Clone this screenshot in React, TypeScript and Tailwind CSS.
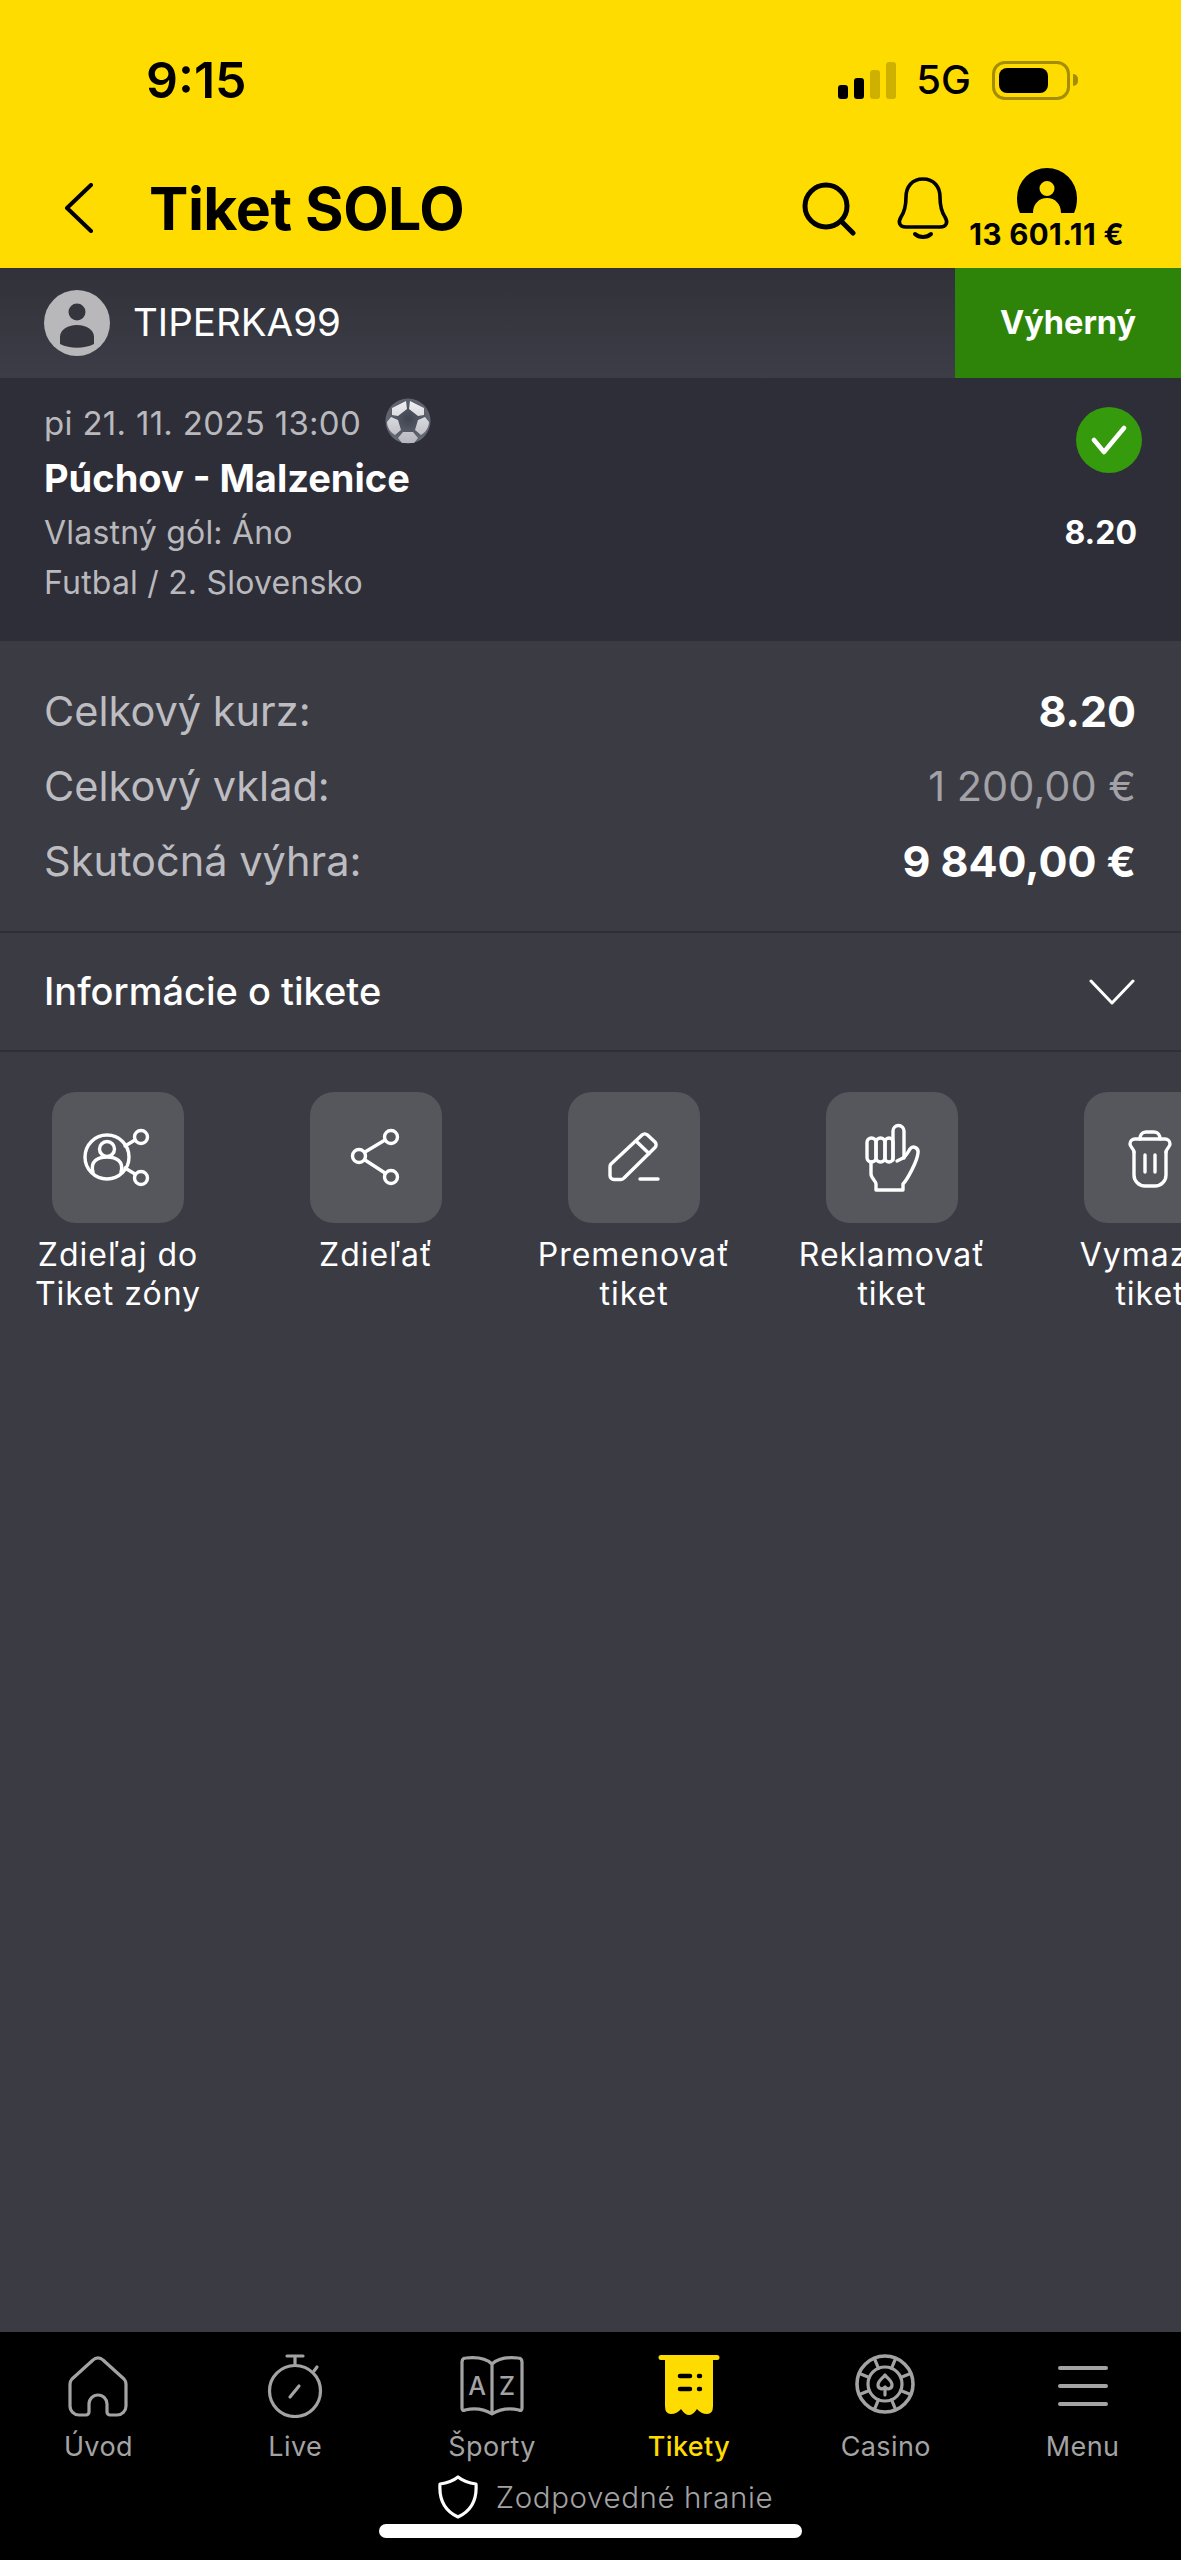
import { ReactNode } from "react";

const font = "font-['Inter','Noto_Sans',sans-serif]";

const TileIcon = ({ children }: { children: ReactNode }) => (
  <svg width="132" height="131" viewBox="0 0 132 131" fill="none" stroke="#fff" strokeWidth="3.4" strokeLinecap="round" strokeLinejoin="round">
    {children}
  </svg>
);

const actions: { lines: string[]; icon: ReactNode }[] = [
  {
    lines: ["Zdieľaj do", "Tiket zóny"],
    icon: (
      <TileIcon>
        <circle cx="55" cy="65" r="22" />
        <circle cx="55" cy="57" r="7.5" />
        <path d="M41 80c-3-11 5-15 14-15s17 4 14 15" />
        <circle cx="89" cy="45" r="6.5" />
        <circle cx="89" cy="86" r="6.5" />
        <path d="M73 54l10-6M73 76l10 6" />
      </TileIcon>
    ),
  },
  {
    lines: ["Zdieľať"],
    icon: (
      <TileIcon>
        <circle cx="81" cy="45" r="6.5" />
        <circle cx="49" cy="64" r="6.5" />
        <circle cx="81" cy="85" r="6.5" />
        <path d="M55 60l20-12M55 68l20 13" />
      </TileIcon>
    ),
  },
  {
    lines: ["Premenovať", "tiket"],
    icon: (
      <TileIcon>
        <path d="M43 72L74 43a4 4 0 0 1 5.5 0L87 50a4 4 0 0 1 0 5.5L56 86a4 4 0 0 1-3 1.500H46a4 4 0 0 1-4-4V75a4 4 0 0 1 1-3Z" />
        <path d="M68 49l13 12.500" />
        <path d="M72 87h18" />
      </TileIcon>
    ),
  },
  {
    lines: ["Reklamovať", "tiket"],
    icon: (
      <TileIcon>
        <path d="M67 68V39a5.500 5.500 0 0 1 11 0v27" />
        <rect x="41" y="46" width="9" height="24" rx="4.500" />
        <rect x="50" y="46" width="9" height="24" rx="4.500" />
        <rect x="59" y="46" width="8" height="24" rx="4" />
        <path d="M45 70v12c0 4 5 7 5 10v6h27v-6c4-4 14-22 15-31 1-5-5-8-8-4-2 3-4 7-7 9l-6 3" />
      </TileIcon>
    ),
  },
  {
    lines: ["Vymazať", "tiket"],
    icon: (
      <TileIcon>
        <path d="M50 60v23a11 11 0 0 0 11 11h10a11 11 0 0 0 11-11V60" />
        <path d="M50 60c0-3-4-5-4-8a5 5 0 0 1 5-5h30a5 5 0 0 1 5 5c0 3-4 5-4 8" />
        <path d="M56 47c0-4 2-7 6-7h8c4 0 6 3 6 7" />
        <path d="M61 63v17M71 63v17" />
      </TileIcon>
    ),
  },
];

const NavIcon = ({ children }: { children: ReactNode }) => (
  <svg width="72" height="64" viewBox="0 0 72 64" fill="none" stroke="#a3a3a3" strokeWidth="3.2" strokeLinecap="round" strokeLinejoin="round">
    {children}
  </svg>
);

const chipNotches = [0, 45, 90, 135, 180, 225, 270, 315];

const navItems: { label: string; active?: boolean; icon: ReactNode }[] = [
  {
    label: "Úvod",
    icon: (
      <NavIcon>
        <path d="M10 25L31 6a7 7 0 0 1 10 0l21 19a8 8 0 0 1 2 5v22a9 9 0 0 1-9 9h-7a3 3 0 0 1-3-3v-8a9 9 0 0 0-18 0v8a3 3 0 0 1-3 3h-7a9 9 0 0 1-9-9V30a8 8 0 0 1 2-5Z" />
      </NavIcon>
    ),
  },
  {
    label: "Live",
    icon: (
      <NavIcon>
        <circle cx="36" cy="37" r="25.500" />
        <path d="M36 11V3M28 2h16M55 17l3-4M31 43l9-11" />
      </NavIcon>
    ),
  },
  {
    label: "Športy",
    icon: (
      <NavIcon>
        <path d="M36 10c-6-6-16-7-26-6-3 0-4 2-4 4v46c0 2 1 3 3 2 9-2 19-1 27 4 8-5 18-6 27-4 2 1 3 0 3-2V8c0-2-1-4-4-4-10-1-20 0-26 6v48" />
        <text x="21" y="41" fill="#a3a3a3" stroke="none" fontSize="25" fontWeight="500" textAnchor="middle" fontFamily="Inter">A</text>
        <text x="51" y="41" fill="#a3a3a3" stroke="none" fontSize="25" fontWeight="500" textAnchor="middle" fontFamily="Inter">Z</text>
      </NavIcon>
    ),
  },
  {
    label: "Tikety",
    active: true,
    icon: (
      <svg width="72" height="64" viewBox="0 0 72 64">
        <path fill="#ffdc00" d="M8 1a2.500 2.500 0 0 0 0 5h4v46Q12 60 18 60Q24 60 28 55Q32 61 36 61Q40 61 44 55Q48 60 54 60Q60 60 60 52V6h4a2.500 2.500 0 0 0 0-5Z" />
        <path stroke="#000" strokeWidth="4.500" strokeLinecap="round" d="M27 22h10M27 35h10M46 22h1M46 35h1" />
      </svg>
    ),
  },
  {
    label: "Casino",
    icon: (
      <NavIcon>
        <circle cx="35" cy="30" r="28" strokeWidth="3.600" />
        <circle cx="35" cy="30" r="17" />
        {chipNotches.map((a) => (
          <path key={a} d="M35 3v10" strokeWidth="3.200" transform={`rotate(${a + 22.5} 35 30)`} />
        ))}
        <path d="M35 21c3 4 7 6 7 10 0 4-5 5-7 2-2 3-7 2-7-2 0-4 4-6 7-10ZM35 33v8" />
      </NavIcon>
    ),
  },
  {
    label: "Menu",
    icon: (
      <NavIcon>
        <path d="M13 14h46M13 32h46M13 50h46" strokeWidth="4" />
      </NavIcon>
    ),
  },
];

const SummaryRow = ({ label, value, strong }: { label: string; value: string; strong?: boolean }) => (
  <div className="flex h-[75px] items-center justify-between">
    <span className="text-[41.5px] text-[#bdbdc1]">{label}</span>
    <span className={strong ? "text-[43px] font-bold text-white" : "text-[41.5px] text-[#a2a2a7]"}>{value}</span>
  </div>
);

export default function App() {
  return (
    <div className={`flex h-[2560px] w-[1181px] flex-col overflow-hidden bg-[#3b3b44] ${font}`}>
      {/* Header */}
      <header className="h-[268px] shrink-0 bg-[#ffdc00] text-black">
        <div className="flex h-[160px] items-center pl-[146px] pr-[103px]">
          <span className="text-[50px] font-semibold">9:15</span>
          <div className="ml-auto flex items-center">
            <div className="flex items-end gap-[6px]">
              <div className="h-[14px] w-[10px] rounded-[3px] bg-black" />
              <div className="h-[21px] w-[10px] rounded-[3px] bg-black" />
              <div className="h-[29px] w-[10px] rounded-[3px] bg-[#cdb000]" />
              <div className="h-[37px] w-[10px] rounded-[3px] bg-[#cdb000]" />
            </div>
            <span className="ml-[20px] text-[40px] font-medium leading-none">5G</span>
            <div className="ml-[21px] flex h-[39px] w-[78px] items-center rounded-[13px] border-[3px] border-[#a48d00] p-[4px]">
              <div className="h-full w-[49px] rounded-[8px] bg-black" />
            </div>
            <div className="ml-[3px] h-[12px] w-[5px] rounded-r-full bg-[#a48d00]" />
          </div>
        </div>
        <div className="flex h-[108px] items-center pl-[64px] pr-[57px]">
          <svg width="30" height="50" viewBox="0 0 30 50" fill="none" stroke="#000" strokeWidth="4" strokeLinecap="round" strokeLinejoin="round" className="-mt-[12px]">
            <path d="M27 2L3 25l24 23" />
          </svg>
          <h1 className="ml-[55px] -mt-[12px] text-[59px] font-bold leading-none tracking-[-0.5px]">Tiket SOLO</h1>
          <div className="mb-[13px] ml-auto flex items-end">
            <svg width="54" height="54" viewBox="0 0 54 54" fill="none" stroke="#000" strokeWidth="5" strokeLinecap="round" className="mb-[12px]">
              <circle cx="24" cy="24" r="21" />
              <path d="M40 40l11 11" />
            </svg>
            <svg width="54" height="62" viewBox="0 0 54 62" fill="none" stroke="#000" strokeWidth="3.600" strokeLinecap="round" strokeLinejoin="round" className="mb-[9px] ml-[40px]">
              <path d="M27 2c-11 0-17 8-17 18 0 9-1 14-5 20-3 5-2 10 5 10h34c7 0 8-5 5-10-4-6-5-11-5-20 0-10-6-18-17-18Z" />
              <path d="M19 57c4 4 12 4 16 0" strokeWidth="4" />
            </svg>
            <div className="ml-[19px] flex flex-col items-center gap-[6px]">
              <svg width="60" height="46" viewBox="0 0 60 46">
                <path fill="#000" fillRule="evenodd" d="M0 30a30 30 0 0 1 60 0c0 6-1 11-3 15H44c0-9-6-15-14-15s-14 6-14 15H3c-2-4-3-9-3-15Zm30-17a7.500 7.500 0 1 0 0 15 7.500 7.500 0 0 0 0-15Z" />
              </svg>
              <span className="whitespace-nowrap text-[29.5px] font-bold leading-[28px] tracking-[0.4px]">13 601.11 €</span>
            </div>
          </div>
        </div>
      </header>

      {/* User bar */}
      <div className="flex h-[110px] shrink-0 items-stretch bg-gradient-to-b from-[#31313a] to-[#3c3d46]">
        <div className="flex flex-1 items-center pl-[44px]">
          <svg width="66" height="66" viewBox="0 0 66 66">
            <circle cx="33" cy="33" r="33" fill="#b8b8bb" />
            <circle cx="33" cy="22" r="8.500" fill="#35353e" />
            <path d="M16 47c0-7 7-12 17-12s17 5 17 12v7c-10 5-24 5-34 0Z" fill="#35353e" />
          </svg>
          <span className="ml-[23px] text-[38.5px] text-white">TIPERKA99</span>
        </div>
        <div className="flex w-[226px] items-center justify-center bg-[#2e8409] text-[32.5px] font-bold text-white">Výherný</div>
      </div>

      {/* Match */}
      <section className="relative h-[263px] shrink-0 bg-[#2e2e38] px-[44px] pt-[20px]">
        <div className="flex h-[50px] items-center">
          <span className="text-[33px] leading-none tracking-[0.3px] text-[#b9b9bd]">pi 21. 11. 2025 13:00</span>
          <svg width="46" height="46" viewBox="0 0 46 46" className="ml-[24px] -mt-[4px]">
            <defs>
              <radialGradient id="ball" cx="0.5" cy="0.45" r="0.6">
                <stop offset="0" stopColor="#3f4450" />
                <stop offset="1" stopColor="#6a6e79" />
              </radialGradient>
              <linearGradient id="panel" x1="0" y1="0" x2="0" y2="1">
                <stop offset="0" stopColor="#f0f0f3" />
                <stop offset="1" stopColor="#b4b6bd" />
              </linearGradient>
            </defs>
            <circle cx="23" cy="23" r="22.500" fill="url(#ball)" />
            <path d="M7 10l14-7 1 8-9 7-6-1ZM39 10L25 3l-1 8 9 7 6-1ZM2 24l4-5 7 3 3 10-6 5c-5-3-8-8-8-13ZM44 24l-4-5-7 3-3 10 6 5c5-3 8-8 8-13ZM18 34h10l5 6-4 5H17l-4-5Z" fill="url(#panel)" />
          </svg>
        </div>
        <div className="mt-[5px] flex h-[50px] items-center text-[38px] font-bold leading-none text-white">Púchov - Malzenice</div>
        <div className="mt-[5px] flex h-[50px] items-center justify-between">
          <span className="text-[32px] tracking-[0.2px] text-[#b9b9bd]">Vlastný gól: Áno</span>
          <span className="text-[32px] font-bold text-white">8.20</span>
        </div>
        <div className="flex h-[50px] items-center text-[32px] tracking-[0.2px] text-[#b9b9bd]">Futbal / 2. Slovensko</div>
        <div className="absolute right-[39px] top-[29px] flex size-[66px] items-center justify-center rounded-full bg-[#359a0c]">
          <svg width="36" height="30" viewBox="0 0 36 30" fill="none" stroke="#fff" strokeWidth="4.500" strokeLinecap="round" strokeLinejoin="round">
            <path d="M3 15l10 12L33 3" />
          </svg>
        </div>
      </section>

      {/* Summary */}
      <section className="h-[292px] shrink-0 border-b-2 border-[#2f2f38] pl-[44px] pr-[45px] pt-[33px]">
        <SummaryRow label="Celkový kurz:" value="8.20" strong />
        <SummaryRow label="Celkový vklad:" value="1 200,00 €" />
        <SummaryRow label="Skutočná výhra:" value="9 840,00 €" strong />
      </section>

      {/* Ticket info */}
      <div className="flex h-[119px] shrink-0 items-center justify-between border-b-2 border-[#2f2f38] pl-[44px] pr-[46px]">
        <span className="text-[38px] font-medium text-white">Informácie o tikete</span>
        <svg width="46" height="26" viewBox="0 0 46 26" fill="none" stroke="#fff" strokeWidth="3" strokeLinecap="round" strokeLinejoin="round">
          <path d="M2 2l21 22L44 2" />
        </svg>
      </div>

      {/* Actions */}
      <div className="-ml-[11px] flex flex-1 pt-[40px]">
        {actions.map((action) => (
          <div key={action.lines[0]} className="flex w-[258px] shrink-0 flex-col items-center">
            <div className="h-[131px] w-[132px] rounded-[24px] bg-[#56575d]">{action.icon}</div>
            <div className="mt-[12px] text-center text-[32px] leading-[39px] tracking-[1px] text-white">
              {action.lines.map((line) => (
                <div key={line} className="whitespace-nowrap">{line}</div>
              ))}
            </div>
          </div>
        ))}
      </div>

      {/* Bottom navigation */}
      <nav className="flex h-[228px] shrink-0 flex-col items-center bg-black pt-[22px]">
        <div className="grid w-full grid-cols-6">
          {navItems.map((item) => (
            <div key={item.label} className="flex flex-col items-center">
              <div className="h-[64px]">{item.icon}</div>
              <span className={`mt-[12px] text-[27px] leading-[34px] tracking-[0.4px] ${item.active ? "font-medium text-[#ffdc00]" : "text-[#a3a3a3]"}`}>
                {item.label}
              </span>
            </div>
          ))}
        </div>
        <div className="ml-[30px] mt-[10px] flex h-[46px] items-center">
          <svg width="40" height="44" viewBox="0 0 40 44" fill="none" stroke="#fff" strokeWidth="3.200" strokeLinejoin="round">
            <path d="M20 2c5 4 11 6 18 7 1 14-3 26-18 33C5 35 1 23 2 9c7-1 13-3 18-7Z" />
          </svg>
          <span className="ml-[18px] text-[29.5px] font-light tracking-[0.6px] text-[#a3a3a3]">Zodpovedné hranie</span>
        </div>
        <div className="mt-[4px] h-[14px] w-[423px] rounded-full bg-white" />
      </nav>
    </div>
  );
}
